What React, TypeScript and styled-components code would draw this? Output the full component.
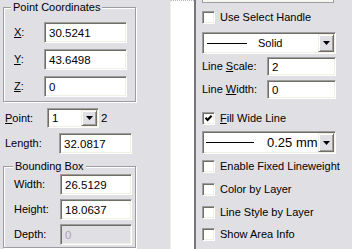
import styled, { createGlobalStyle, css } from 'styled-components';

const GlobalStyle = createGlobalStyle`
  * { box-sizing: border-box; }
  html, body { margin: 0; padding: 0; background: #e0dfe3; }
  body {
    font-family: 'Liberation Sans', Arial, sans-serif;
    font-size: 11px;
    color: #000;
  }
`;

const sunken = css`
  border: 1px solid;
  border-color: #9d9da1 #fff #fff #9d9da1;
  box-shadow: inset 1px 1px 0 #716f64, inset -1px -1px 0 #f1efe2;
`;

const raised = css`
  border: 1px solid;
  border-color: #f1efe2 #716f64 #716f64 #f1efe2;
  box-shadow: inset 1px 1px 0 #fff, inset -1px -1px 0 #9d9da1;
`;

const Window = styled.div`
  display: flex;
  width: 352px;
  height: 249px;
  overflow: hidden;
  background: #e0dfe3;
`;

const LeftPanel = styled.div`
  width: 170px;
  flex-shrink: 0;
  padding: 7px 0 0 3px;
  display: flex;
  flex-direction: column;
  align-items: flex-start;
`;

const Strip = styled.div`
  width: 24px;
  flex-shrink: 0;
  background: #fff;
  border-top: 1px dotted #b4b4bc;
  border-left: 1px solid #f1efe2;
`;

const RightPanel = styled.div`
  flex: 1;
  border-left: 2px solid #76747c;
  padding-left: 6px;
  display: flex;
  flex-direction: column;
  align-items: flex-start;
`;

const Group = styled.div<{ $mt: number; $pb: number }>`
  width: 133px;
  margin-top: ${(p) => p.$mt}px;
  padding-bottom: ${(p) => p.$pb}px;
  border: 1px solid #9d9da1;
  box-shadow: 1px 1px 0 #fff, inset 1px 1px 0 #fff;
  display: flex;
  flex-direction: column;
`;

const GroupTitle = styled.div<{ $indent: number }>`
  align-self: flex-start;
  margin: -7px 0 0 ${(p) => p.$indent}px;
  padding: 0 2px;
  line-height: 13px;
  background: #e0dfe3;
`;

const Fields = styled.div<{ $mt: number; $gap: number }>`
  display: flex;
  flex-direction: column;
  gap: ${(p) => p.$gap}px;
  margin-top: ${(p) => p.$mt}px;
  padding-left: 10px;
`;

const Row = styled.div<{ $mt?: number; $pl?: number }>`
  display: flex;
  align-items: center;
  margin-top: ${(p) => p.$mt ?? 0}px;
  padding-left: ${(p) => p.$pl ?? 0}px;
`;

const Label = styled.span<{ $w: number }>`
  width: ${(p) => p.$w}px;
  flex-shrink: 0;
  line-height: 13px;
  white-space: nowrap;
`;

const TextBox = styled.input<{ $w: number; $h: number }>`
  width: ${(p) => p.$w}px;
  height: ${(p) => p.$h}px;
  margin: 0;
  padding: 0 4px;
  font-family: inherit;
  font-size: 11.5px;
  color: #000;
  background: #fff;
  outline: none;
  ${sunken}

  &:disabled {
    background: #e0dfe3;
    color: #aca899;
  }
`;

const Combo = styled.div<{ $w: number; $h: number; $big?: boolean }>`
  width: ${(p) => p.$w}px;
  height: ${(p) => p.$h}px;
  padding: 1px;
  display: flex;
  align-items: stretch;
  background: #fff;
  font-size: ${(p) => (p.$big ? 13 : 11.5)}px;
  ${sunken}
`;

const ComboValue = styled.div<{ $pl: number }>`
  flex: 1;
  display: flex;
  align-items: center;
  padding-left: ${(p) => p.$pl}px;
  white-space: nowrap;
`;

const LineSample = styled.span<{ $w: number; $gap: number }>`
  width: ${(p) => p.$w}px;
  height: 1px;
  background: #000;
  margin-right: ${(p) => p.$gap}px;
  flex-shrink: 0;
`;

const DropButton = styled.div`
  width: 16px;
  flex-shrink: 0;
  display: flex;
  align-items: center;
  justify-content: center;
  background: #e0dfe3;
  ${raised}
`;

const Suffix = styled.span`
  margin-left: 2px;
  font-size: 11.5px;
`;

const CutOff = styled.div`
  width: 132px;
  height: 3px;
  background: #f7f6f0;
  border: 1px solid #9d9da1;
  border-top: none;
`;

const CheckRow = styled.label<{ $mt: number }>`
  display: flex;
  align-items: center;
  gap: 5px;
  margin-top: ${(p) => p.$mt}px;
  line-height: 13px;
  white-space: nowrap;
`;

const CheckBox = styled.span`
  width: 13px;
  height: 13px;
  flex-shrink: 0;
  display: flex;
  align-items: center;
  justify-content: center;
  background: #fff;
  ${sunken}
`;

const Arrow = () => (
  <svg width="7" height="4" viewBox="0 0 7 4">
    <polygon points="0,0 7,0 3.5,4" fill="#000" />
  </svg>
);

const Tick = () => (
  <svg width="9" height="9" viewBox="0 0 9 9">
    <path d="M1.5 3.8 L3.6 6 L7.6 1.8" stroke="#000" strokeWidth="2" fill="none" />
  </svg>
);

const Check = ({ checked, children, mt }: { checked?: boolean; children: React.ReactNode; mt: number }) => (
  <CheckRow $mt={mt}>
    <CheckBox>{checked && <Tick />}</CheckBox>
    <span>{children}</span>
  </CheckRow>
);

export default function App() {
  return (
    <Window>
      <GlobalStyle />
      <LeftPanel>
        <Group $mt={0} $pb={4}>
          <GroupTitle $indent={7}>Point Coordinates</GroupTitle>
          <Fields $mt={8} $gap={6}>
            <Row>
              <Label $w={30}><u>X</u>:</Label>
              <TextBox $w={83} $h={21} readOnly defaultValue="30.5241" />
            </Row>
            <Row>
              <Label $w={30}><u>Y</u>:</Label>
              <TextBox $w={83} $h={21} readOnly defaultValue="43.6498" />
            </Row>
            <Row>
              <Label $w={30}><u>Z</u>:</Label>
              <TextBox $w={83} $h={21} readOnly defaultValue="0" />
            </Row>
          </Fields>
        </Group>

        <Row $mt={6} $pl={2}>
          <Label $w={42}><u>P</u>oint:</Label>
          <Combo $w={52} $h={20}>
            <ComboValue $pl={3}>1</ComboValue>
            <DropButton><Arrow /></DropButton>
          </Combo>
          <Suffix>2</Suffix>
        </Row>

        <Row $mt={5} $pl={2}>
          <Label $w={54}>Length:</Label>
          <TextBox $w={73} $h={21} readOnly defaultValue="32.0817" />
        </Row>

        <Group $mt={12} $pb={2}>
          <GroupTitle $indent={9}>Bounding Box</GroupTitle>
          <Fields $mt={1} $gap={4}>
            <Row>
              <Label $w={46}>Width:</Label>
              <TextBox $w={72} $h={21} readOnly defaultValue="26.5129" />
            </Row>
            <Row>
              <Label $w={46}>Height:</Label>
              <TextBox $w={72} $h={21} readOnly defaultValue="18.0637" />
            </Row>
            <Row>
              <Label $w={46}>Depth:</Label>
              <TextBox $w={72} $h={21} disabled defaultValue="0" />
            </Row>
          </Fields>
        </Group>
      </LeftPanel>

      <Strip />

      <RightPanel>
        <CutOff />
        <Check mt={8}>Use Select Handle</Check>

        <Row $mt={8}>
          <Combo $w={134} $h={22}>
            <ComboValue $pl={3}>
              <LineSample $w={40} $gap={11} />
              <span style={{ fontSize: 11 }}>Solid</span>
            </ComboValue>
            <DropButton><Arrow /></DropButton>
          </Combo>
        </Row>

        <Row $mt={3}>
          <Label $w={65}>Line <u>S</u>cale:</Label>
          <TextBox $w={69} $h={19} readOnly defaultValue="2" />
        </Row>
        <Row $mt={4}>
          <Label $w={65}>Line <u>W</u>idth:</Label>
          <TextBox $w={69} $h={19} readOnly defaultValue="0" />
        </Row>

        <Check mt={13} checked><u>F</u>ill Wide Line</Check>

        <Row $mt={6}>
          <Combo $w={134} $h={23} $big>
            <ComboValue $pl={2}>
              <LineSample $w={48} $gap={13} />
              0.25 mm
            </ComboValue>
            <DropButton><Arrow /></DropButton>
          </Combo>
        </Row>

        <Check mt={6}>Enable Fixed Lineweight</Check>
        <Check mt={10}>Color by Layer</Check>
        <Check mt={10}>Line Style by Layer</Check>
        <Check mt={9}>Show Area Info</Check>
      </RightPanel>
    </Window>
  );
}
